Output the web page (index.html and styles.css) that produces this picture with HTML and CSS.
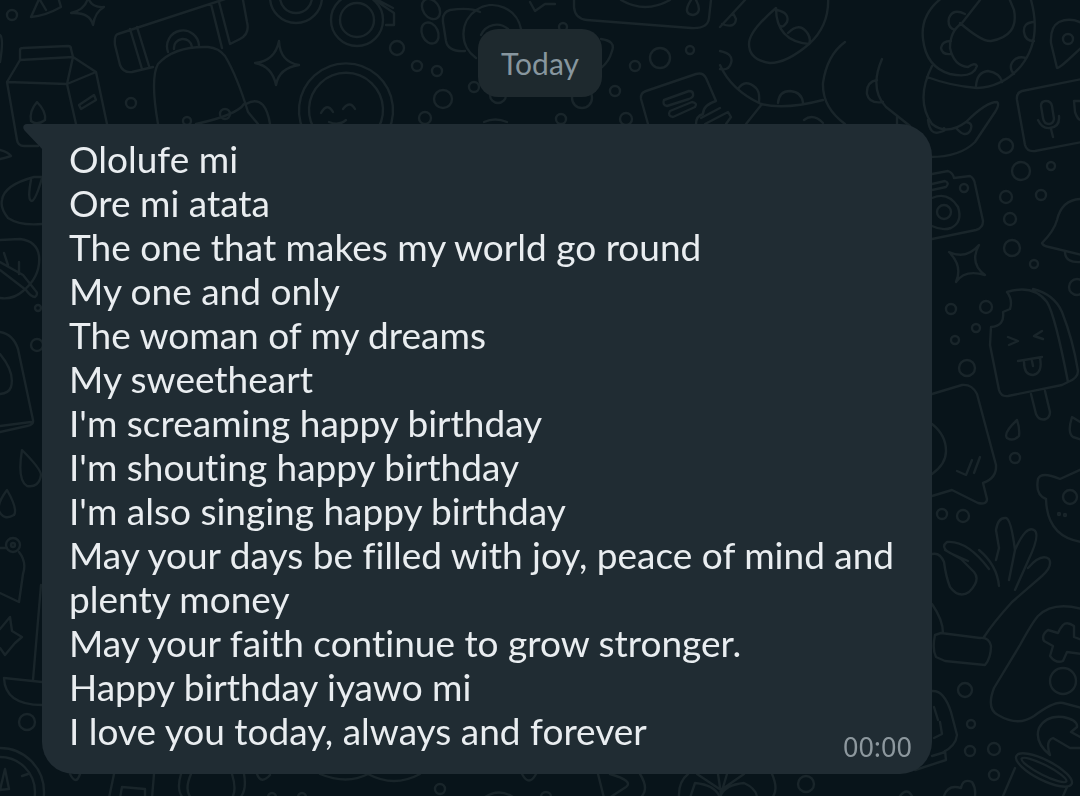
FILE: index.html
```
<!DOCTYPE html>
<html lang="en">
<head>
    <meta charset="UTF-8">
    <meta name="viewport" content="width=device-width, initial-scale=1.0">
    <title>Chat</title>
    <link rel="stylesheet" href="styles.css">
</head>
<body>
    <!-- Wallpaper doodles -->
    <svg class="wallpaper" viewBox="0 0 1080 796" preserveAspectRatio="xMinYMin slice" aria-hidden="true">
        <!-- milk carton -->
        <path d="M20 60V50Q20 48 23 48L68 46Q71 46 71 49L73 57L96 72L107 124M20 60L7 82L17 140Q18 146 24 146H38M20 60L73 57L67 84L7 82M67 84L96 72M67 84L76 124M79 105L94 95L96 100L81 109ZM37 102C31 109 30 116 31 121Q37 126 45 120C46 113 42 107 37 102Z"/>
        <path d="M40 -3L31 17Q45 16 61 7L58 -3M40 0L46 10M71 13Q85 10 88 -2Q92 8 104 7Q95 12 93 25Q90 12 71 13ZM0 35Q4 38 0 62"/>
        <!-- skateboard and backpack -->
        <path d="M118 34Q114 35 115 45L120 65Q123 73 132 72L153 67M118 34L225 -1M130 29L142 69M137 27L149 66M211 4L222 48M219 2L230 44L240 39Q250 34 247 22L243 0M168 52A16 16 0 1 1 199 46M174 49A9 9 0 1 1 192 47"/>
        <path d="M158 124Q150 78 158 64Q174 46 208 47Q219 48 225 56Q237 76 248 112L258 124M246 104Q256 98 263 105Q268 111 270 124M196 124Q237 115 244 104"/>
        <circle cx="187" cy="121" r="4"/><circle cx="225" cy="114" r="5"/>
        <!-- stars -->
        <path d="M279 41Q280 62 299 65Q279 68 276 85Q272 66 255 63Q275 61 279 41ZM949 252Q966 260 979 245Q969 263 985 275Q965 269 956 282Q963 266 949 252ZM0 150Q8 152 11 156Q5 158 0 159"/>
        <!-- smiley -->
        <path d="M308 138A47 47 0 1 1 384 138M318 134A37 37 0 1 1 374 134M321 113Q327 102 333 112M343 109Q350 100 355 109M329 122Q339 126 346 120"/>
        <!-- rings and paw -->
        <circle cx="296" cy="-3" r="26"/><circle cx="296" cy="-3" r="16"/>
        <circle cx="357" cy="20" r="26"/><circle cx="357" cy="20" r="17"/>
        <path d="M369 -4L394 13V25H386M372 -3L393 8"/>
        <ellipse cx="431" cy="9" rx="8" ry="11" transform="rotate(-35 431 9)"/><ellipse cx="430" cy="33" rx="8" ry="11" transform="rotate(-25 430 33)"/>
        <!-- camera and cable behind the date -->
        <path d="M480 12Q470 7 450 10Q442 12 443 22L446 41Q448 52 465 51M476 58A29 29 0 1 1 521 29M481 35A17 17 0 0 1 508 29M530 2L535 11L545 4H555M601 39Q616 41 612 51Q609 62 601 68"/>
        <path d="M574 0V7Q575 19 587 20L691 28Q708 29 709 18L711 0M621 0Q645 14 670 0M691 0Q682 14 693 15Q703 13 696 0"/>
        <!-- notebook and pencil -->
        <path d="M648 124L641 99Q640 93 646 91L696 74Q703 72 706 78L716 101Q703 105 703 114Q696 116 696 124M664 100L689 91Q693 91 693 94Q694 97 689 99L667 106Q662 105 664 100ZM670 111L692 102Q698 103 695 107L673 117Q667 116 670 111ZM701 118L720 108M705 124L728 112L731 117L726 124"/>
        <!-- octopus arms -->
        <path d="M720 27L745 0M828 -4Q830 25 809 44Q787 63 770 63Q749 60 749 44Q749 31 776 8Q776 41 809 44M777 10Q790 13 787 22Q783 28 781 26M788 33Q800 21 808 34Q811 39 809 44M720 51Q734 54 731 63Q729 71 720 69M720 65Q731 90 761 104Q785 110 823 100M738 89Q745 78 756 88Q760 92 759 102M778 103Q779 91 790 91Q802 92 803 103M762 104L746 124M804 120Q813 113 823 123M845 42Q827 55 823 83Q822 107 845 124M882 59Q869 89 886 107L910 126M877 80Q866 82 867 94Q869 104 883 102M897 117V124M722 24Q735 29 736 19L733 13"/>
        <path d="M943 -3Q920 14 923 39Q926 67 950 74Q973 79 977 66Q975 62 968 67Q954 66 950 48Q950 31 962 23L980 0M960 23Q982 42 991 41Q1019 36 1014 10L1009 -2M1031 0Q1042 40 1021 66Q1003 87 977 88Q951 86 927 77M965 14Q953 8 949 18Q947 28 955 30M951 41Q942 41 941 48Q942 55 951 54M1033 22Q1023 23 1024 32Q1025 41 1034 41M1026 58Q1015 55 1011 65Q1010 70 1014 74M976 86Q977 72 988 71Q1000 73 1002 82M932 66Q915 100 932 124Q947 136 966 122Q986 102 997 102Q1000 104 995 112L975 142Q960 157 930 157M928 120Q930 136 940 132Q947 131 944 128M957 129Q965 138 970 131Q974 123 966 122"/>
        <!-- map pin and microphone card -->
        <path d="M1082 23Q1070 17 1059 22Q1050 27 1051 43L1057 68Q1058 69 1068 60L1082 47M1082 79L1022 91Q1016 93 1017 100L1025 145Q1027 152 1035 151L1082 142M1041 106Q1041 101 1046 101Q1051 101 1052 106L1054 119Q1053 124 1049 124Q1044 124 1043 118ZM1038 120Q1042 129 1050 128Q1060 127 1059 116M1051 129L1053 137M1074 101L1075 112Q1078 121 1082 120M1074 101H1082"/>
        <circle cx="1068" cy="39" r="5"/>
        <!-- instant camera -->
        <path d="M932 174L948 171Q953 173 954 178L970 176Q974 178 975 184L983 221Q983 228 976 230L932 239M932 184L945 181Q950 183 946 187L932 190M932 198Q948 191 958 207Q963 222 951 228Q942 231 932 226"/>
        <circle cx="944" cy="212" r="7"/><circle cx="964" cy="188" r="4"/>
        <!-- bell -->
        <path d="M1082 199Q1062 199 1057 220Q1054 231 1042 243Q1043 246 1049 247L1082 255M1065 252Q1065 263 1081 262"/>
        <!-- ice lolly -->
        <path d="M999 390L990 345L991 327Q1005 326 1003 312L1010 309Q1013 300 1007 292Q1033 284 1047 302Q1055 315 1068 382L1062 385L1008 396Q1001 397 999 390ZM1033 289Q1054 294 1062 312Q1073 340 1078 371Q1078 378 1068 382M1031 394L1036 414Q1039 421 1046 419Q1050 417 1050 412L1045 391M1008 337L1018 341L1009 345M1042 331L1034 336L1043 339M1018 361L1042 357M1024 362Q1024 375 1033 375Q1043 373 1040 358M1032 361L1033 366"/>
        <!-- chat sticker -->
        <path d="M932 394L962 385Q972 384 977 394L996 465Q997 478 983 483L987 499Q987 505 978 503L952 490L932 496M932 424Q946 435 946 451Q946 464 932 474M957 471L966 475L972 460M974 473L980 457"/>
        <!-- drops -->
        <path d="M1017 420Q1003 433 1007 438Q1013 442 1019 436Q1020 429 1017 420ZM1082 423L1072 417Q1067 433 1073 437L1082 440M22 450Q17 480 27 486Q39 488 41 475Q41 469 22 450ZM7 490Q-3 503 -1 511Q4 521 14 515Q18 509 7 490Z"/>
        <!-- cat -->
        <path d="M1046 499Q1035 495 1038 479Q1041 471 1060 479L1082 469M1046 499Q1047 537 1082 542"/>
        <circle cx="1070" cy="497" r="7"/><circle cx="1059" cy="514" r="1"/><circle cx="1065" cy="515" r="1"/>
        <!-- leaves and pot -->
        <path d="M996 560L999 548L996 530Q998 517 1006 518Q1011 519 1015 550L1009 580M1015 550Q1026 525 1034 530Q1041 534 1028 561L1015 590M989 569Q967 540 947 542Q940 547 950 553L968 561M932 554Q940 552 944 562Q946 577 950 587Q959 599 969 592Q981 580 974 572L961 559L945 550M979 550Q997 565 999 586M1028 568Q1041 553 1049 559Q1053 566 1042 576L1012 602Q993 623 984 637M932 604Q943 620 943 633M935 635Q932 649 936 657L945 661L985 665Q991 658 991 646Q989 637 980 638L941 633Z"/>
        <!-- gamepad -->
        <path d="M1082 609Q1053 601 1038 616Q1032 623 1020 645L994 688Q986 709 998 715Q1018 727 1034 716Q1054 701 1063 703L1082 708M1060 629L1063 625Q1067 621 1074 626L1074 637L1082 640M1060 629L1058 633L1048 630Q1041 635 1044 641L1053 646L1050 656Q1056 664 1063 661L1067 652L1082 654"/>
        <circle cx="1063" cy="681" r="13"/>
        <!-- wrench, can, robot -->
        <path d="M1050 755Q1034 742 1039 728Q1046 715 1063 717Q1078 720 1077 727L1071 732L1082 738M1050 755Q1045 741 1053 738L1070 748H1082M1015 768L1003 796M1067 787L1063 796M932 691Q944 690 951 712L957 735Q956 746 942 753L932 756M934 707L938 720M940 722L942 734L934 738M945 751L946 760L915 770M944 796Q948 784 961 788Q963 778 972 782Q976 788 975 796M900 796Q907 787 912 796"/>
        <ellipse cx="1044" cy="770" rx="31" ry="10" transform="rotate(27 1044 770)"/><ellipse cx="1044" cy="770" rx="25" ry="5" transform="rotate(27 1044 770)"/>
        <!-- left edge -->
        <path d="M42 177H34Q4 185 2 200Q0 208 8 218Q20 226 42 224M31 180Q27 201 32 201Q36 199 42 178M0 240L20 239Q37 241 39 256Q41 276 23 291Q13 300 0 298M0 262L23 275L35 290Q39 294 35 297Q31 297 26 290L0 270M4 253L8 265M19 262V274M0 332Q13 334 18 349L33 420Q34 425 27 426L0 432M0 426L31 422M0 354Q15 372 11 387Q9 393 0 394"/>
        <path d="M0 548H7M19 552Q27 562 23 574L19 602L0 593M0 629L10 617L12 631L22 637L15 643L5 655L0 648M41 585L33 680M42 682L4 678Q5 705 42 705"/>
        <circle cx="13" cy="545" r="7"/><circle cx="13" cy="545" r="2"/>
        <circle cx="27" cy="722" r="8"/><circle cx="0" cy="792" r="44"/><circle cx="0" cy="792" r="35"/>
        <path d="M0 790L5 769L9 789ZM22 776L28 774"/>
        <!-- bottom edge -->
        <path d="M70 774Q76 786 80 774M114 774L109 798M154 774L152 798M120 798L122 787L145 789V798M181 774Q176 790 183 798M191 774Q184 790 191 798M232 774Q237 790 232 798M244 774Q247 790 240 798M257 774Q261 785 270 775M320 774Q347 785 368 774Q394 788 420 774M522 774Q529 787 536 774M598 774L604 798M610 774Q634 781 626 787L609 798M640 774Q650 790 640 798M679 798Q678 782 688 774M690 798L695 783Q716 785 720 798Q723 785 744 783Q757 789 757 798M718 774L721 794L727 774M697 774L721 790L744 774M772 774Q779 790 772 798M485 797Q499 788 513 797"/>
        <circle cx="440" cy="789" r="5"/><circle cx="806" cy="784" r="8"/><circle cx="272" cy="797" r="4"/><circle cx="302" cy="797" r="4"/><circle cx="546" cy="797" r="5"/>
        <!-- bubbles -->
        <circle cx="12" cy="15" r="5"/><circle cx="131" cy="103" r="5"/><circle cx="397" cy="48" r="7"/><circle cx="417" cy="66" r="5"/><circle cx="437" cy="71" r="5"/><circle cx="443" cy="99" r="9"/><circle cx="474" cy="87" r="5"/><circle cx="425" cy="118" r="6"/><circle cx="498" cy="95" r="8"/><circle cx="563" cy="27" r="4"/><circle cx="582" cy="98" r="10"/><circle cx="561" cy="119" r="5"/><circle cx="626" cy="119" r="6"/><circle cx="615" cy="91" r="5"/><circle cx="635" cy="66" r="5"/><circle cx="660" cy="58" r="10"/><circle cx="690" cy="50" r="4"/><path d="M484 122Q495 117 507 122"/>
        <circle cx="1006" cy="146" r="7"/><circle cx="1021" cy="171" r="9"/><circle cx="1051" cy="166" r="4"/><circle cx="1006" cy="197" r="6"/><circle cx="1041" cy="195" r="5"/><circle cx="1010" cy="219" r="6"/><circle cx="1012" cy="248" r="8"/><circle cx="1034" cy="264" r="4"/><circle cx="1077" cy="287" r="8"/><circle cx="951" cy="309" r="5"/><circle cx="986" cy="307" r="6"/><circle cx="976" cy="328" r="4"/><circle cx="955" cy="340" r="4"/><circle cx="967" cy="368" r="8"/><circle cx="1015" cy="458" r="5"/><circle cx="942" cy="514" r="5"/><circle cx="963" cy="516" r="6"/><circle cx="965" cy="690" r="7"/><circle cx="971" cy="724" r="4"/><circle cx="970" cy="751" r="5"/><circle cx="994" cy="749" r="6"/><circle cx="994" cy="775" r="5"/><circle cx="38" cy="308" r="3"/><circle cx="37" cy="345" r="6"/>
    </svg>

    <main class="chat">
        <time class="date">Today</time>

        <article class="message">
            <svg class="tail" viewBox="0 0 20 26" aria-hidden="true">
                <path d="M20 0H4C0 0-1 4 2 7L20 26Z"/>
            </svg>
            <p class="text">Ololufe mi<br>
            Ore mi atata<br>
            The one that makes my world go round<br>
            My one and only<br>
            The woman of my dreams<br>
            My sweetheart<br>
            I'm screaming happy birthday<br>
            I'm shouting happy birthday<br>
            I'm also singing happy birthday<br>
            May your days be filled with joy, peace of mind and plenty money<br>
            May your faith continue to grow stronger.<br>
            Happy birthday iyawo mi<br>
            I love you today, always and forever</p>
            <time class="sent">00:00</time>
        </article>
    </main>
</body>
</html>
```

FILE: styles.css
```
* {
    box-sizing: border-box;
}
body {
    margin: 0;
    min-height: 100vh;
    background-color: #08141a;
    font-family: Lato, sans-serif;
}
.wallpaper {
    position: fixed;
    top: 0;
    left: 0;
    width: 100%;
    height: 100%;
    fill: none;
    stroke: #19252a;
    stroke-width: 2.4;
    stroke-linecap: round;
    stroke-linejoin: round;
}
.chat {
    position: relative;
    display: flex;
    flex-direction: column;
    padding: 29px 148px 22px 42px;
}
.date {
    align-self: center;
    /* centred on the window, not on the message column */
    margin-left: 106px;
    margin-bottom: 27px;
    padding: 12px 23px;
    border-radius: 20px;
    background-color: #1e292e;
    color: #87969f;
    font-size: 30px;
    line-height: 44px;
}
.message {
    position: relative;
    display: flex;
    flex-direction: column;
    padding: 13px 20px 15px 27px;
    border-radius: 0 32px 32px 32px;
    background-color: #202c33;
}
.tail {
    position: absolute;
    top: 0;
    left: -19px;
    width: 20px;
    height: 26px;
    fill: #202c33;
}
.text {
    margin: 0;
    color: #e9edf0;
    font-size: 37px;
    line-height: 44px;
    font-variant-ligatures: none;
}
.sent {
    align-self: flex-end;
    margin-top: -18px;
    color: #8d989e;
    font-family: "Noto Sans", sans-serif;
    font-size: 27px;
    line-height: 24px;
}
```
